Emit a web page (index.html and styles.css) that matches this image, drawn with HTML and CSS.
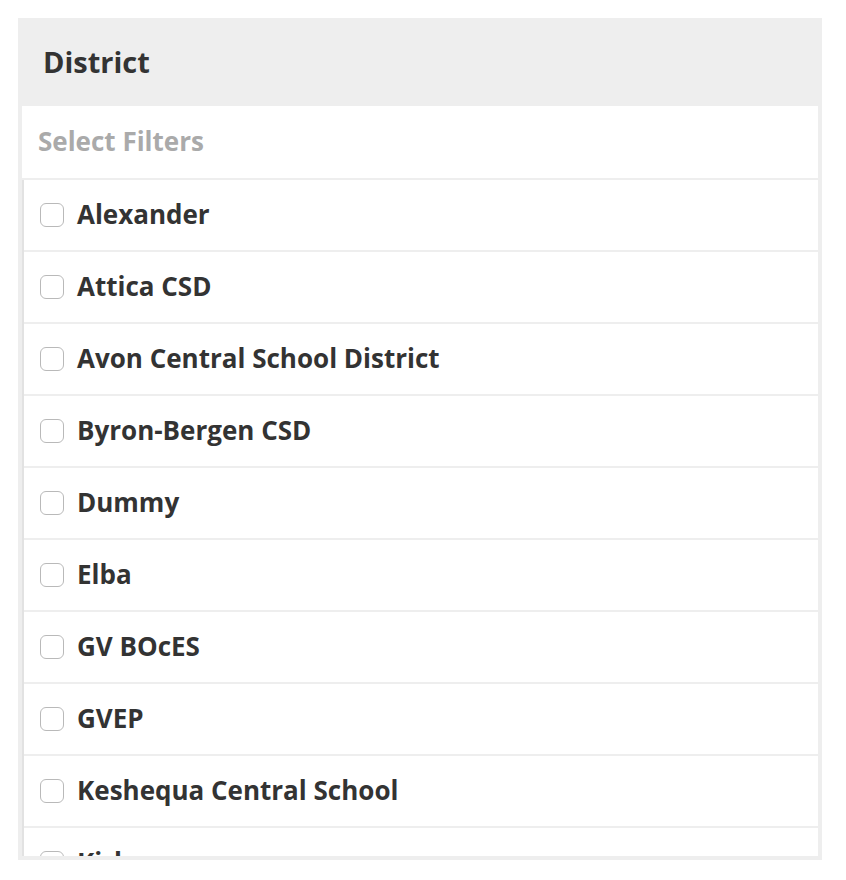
FILE: index.html
```html
<!DOCTYPE html>
<html>
<head>
<meta charset="utf-8">
<link rel="stylesheet" href="styles.css">
</head>
<body>
<div class="panel">
  <div class="panel-header">District</div>
  <div class="panel-body">
    <div class="search">Select Filters</div>
    <ul class="list">
      <li class="item"><span class="box"></span><span class="label">Alexander</span></li>
      <li class="item"><span class="box"></span><span class="label">Attica CSD</span></li>
      <li class="item"><span class="box"></span><span class="label">Avon Central School District</span></li>
      <li class="item"><span class="box"></span><span class="label">Byron-Bergen CSD</span></li>
      <li class="item"><span class="box"></span><span class="label">Dummy</span></li>
      <li class="item"><span class="box"></span><span class="label">Elba</span></li>
      <li class="item"><span class="box"></span><span class="label">GV BOcES</span></li>
      <li class="item"><span class="box"></span><span class="label">GVEP</span></li>
      <li class="item"><span class="box"></span><span class="label">Keshequa Central School</span></li>
      <li class="item"><span class="box"></span><span class="label">Kirk</span></li>
    </ul>
  </div>
</div>
</body>
</html>
```
FILE: styles.css
```css
html, body {
  margin: 0;
  padding: 0;
  background: #fff;
}
body {
  padding: 18px;
  font-family: "Open Sans", Lato, sans-serif;
  color: #333;
}
.panel {
  width: 804px;
  height: 842px;
  background: #eeeeee;
  display: flex;
  flex-direction: column;
  box-sizing: border-box;
  padding: 0 4px 4px 4px;
}
.panel-header {
  height: 88px;
  flex: none;
  display: flex;
  align-items: center;
  padding-left: 21px;
  padding-bottom: 2px;
  box-sizing: border-box;
  font-size: 29px;
  line-height: 1;
  font-weight: 700;
  color: #333;
}
.panel-body {
  flex: 1;
  min-height: 0;
  background: #fff;
  display: flex;
  flex-direction: column;
  overflow: hidden;
}
.search {
  height: 74px;
  flex: none;
  box-sizing: border-box;
  border-bottom: 2px solid #eeeeee;
  display: flex;
  align-items: center;
  padding-left: 16px;
  padding-bottom: 2px;
  font-size: 26px;
  line-height: 1;
  font-weight: 700;
  color: #aaaaaa;
}
.list {
  list-style: none;
  margin: 0;
  padding: 0;
  border-left: 2px solid #e2e2e2;
  flex: 1;
  overflow: hidden;
}
.item {
  height: 72px;
  box-sizing: border-box;
  border-bottom: 2px solid #eeeeee;
  display: flex;
  align-items: center;
  padding-left: 16px;
}
.box {
  width: 22px;
  height: 22px;
  border: 1px solid #b9b9b9;
  border-radius: 6px;
  flex: none;
  margin-right: 13px;
  background: #fff;
}
.label {
  font-size: 26px;
  line-height: 1;
  font-weight: 700;
  color: #333;
  padding-bottom: 3px;
}
```
